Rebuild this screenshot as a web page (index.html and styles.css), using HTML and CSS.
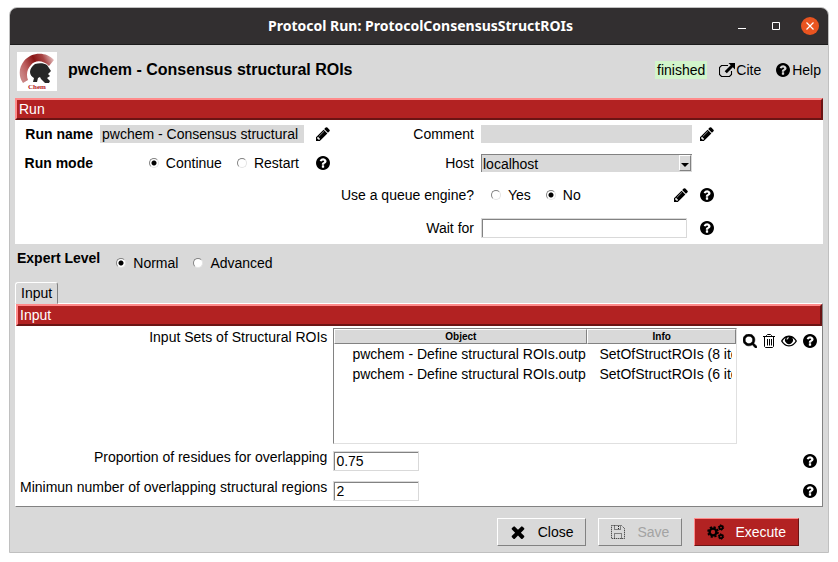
FILE: index.html
```html
<!DOCTYPE html>
<html lang="en">
<head>
<meta charset="utf-8">
<meta name="viewport" content="width=device-width, initial-scale=1">
<title>Protocol Run: ProtocolConsensusStructROIs</title>
<link rel="stylesheet" href="styles.css">
</head>
<body>
<svg class="sprite" aria-hidden="true">
  <symbol id="i-pencil" viewBox="128 128 1536 1536"><path d="M491 1536l91-91-235-235-91 91v107h128v128h107zm523-928q0-22-22-22-10 0-17 7l-542 542q-7 7-7 17 0 22 22 22 10 0 17-7l542-542q7-7 7-17zm-54-192l416 416-832 832h-416v-416zm683 96q0 53-37 90l-166 166-416-416 166-165q36-38 90-38 53 0 91 38l235 234q37 39 37 91z"/></symbol>
  <symbol id="i-help" viewBox="128 128 1536 1536"><path d="M1024 1376v-192q0-14-9-23t-23-9h-192q-14 0-23 9t-9 23v192q0 14 9 23t23 9h192q14 0 23-9t9-23zm256-672q0-88-55.5-163t-138.5-116-170-41q-243 0-371 213-15 24 8 42l132 100q7 6 19 6 16 0 25-12 53-68 86-92 34-24 86-24 48 0 85.5 26t37.5 59q0 38-20 61t-68 45q-63 28-115.5 86.5t-52.5 125.5v36q0 14 9 23t23 9h192q14 0 23-9t9-23q0-19 21.5-49.5t54.5-49.5q32-18 49-28.5t46-35 44.5-48 28-60.5 12.5-81zm384 192q0 209-103 385.5t-279.5 279.5-385.5 103-385.5-103-279.5-279.5-103-385.5 103-385.5 279.5-279.5 385.5-103 385.5 103 279.5 279.5 103 385.5z"/></symbol>
  <symbol id="i-search" viewBox="64 128 1664 1664"><path stroke="currentColor" stroke-width="70" d="M1216 832q0-185-131.5-316.5t-316.5-131.5-316.5 131.5-131.5 316.5 131.5 316.5 316.5 131.5 316.5-131.5 131.5-316.5zm512 832q0 52-38 90t-90 38q-54 0-90-38l-343-342q-179 124-399 124-143 0-273.5-55.5t-225-150-150-225-55.5-273.5 55.5-273.5 150-225 225-150 273.5-55.5 273.5 55.5 225 150 150 225 55.5 273.5q0 220-124 399l343 343q37 37 37 90z"/></symbol>
  <symbol id="i-times" viewBox="302 238 1188 1316"><path d="M1490 1322q0 40-28 68l-136 136q-28 28-68 28t-68-28l-294-294-294 294q-28 28-68 28t-68-28l-136-136q-28-28-28-68t28-68l294-294-294-294q-28-28-28-68t28-68l136-136q28-28 68-28t68 28l294 294 294-294q28-28 68-28t68 28l136 136q28 28 28 68t-28 68l-294 294 294 294q28 28 28 68z"/></symbol>
  <symbol id="i-trash" viewBox="0 0 12 14"><path fill="none" stroke="currentColor" d="M0 2.5h12M3.500 2.500V1.500L4.500 .5h3l1 1v1M1.500 3v9.500l1 1h7l1-1V3M4.500 5v6.500M6.500 5v6.500M8.500 5v6.500"/></symbol>
  <symbol id="i-eye" viewBox="0 0 16 12"><path fill-rule="evenodd" d="M8 .5C12 .5 14.500 3.500 16 6c-1.500 2.500-4 5.500-8 5.500S1.500 8.500 0 6C1.500 3.500 4 .5 8 .5zM1.500 6C3 8.500 5 10.300 8 10.300S13 8.500 14.500 6C13.700 4.600 12.700 3.500 11.300 2.700A4 4 0 1 1 4.700 2.700C3.300 3.500 2.300 4.600 1.500 6zM7.800 2.200A2.300 2.300 0 0 0 5.500 4.500h1A1.400 1.400 0 0 1 7.800 3.200z"/></symbol>
  <symbol id="i-external" viewBox="0 0 16 14"><path fill="none" stroke="currentColor" stroke-width="1.100" d="M9 2.500H2.500l-2 2v7l2 2h8l2-2V8"/><path d="M9.500 0H16v6.500l-2.200-2.200-6 6L5.700 8.200l6-6z"/></symbol>
  <symbol id="i-save" viewBox="0 0 14 14"><path fill="none" stroke="currentColor" stroke-dasharray="1 1" d="M.5 .5h10l3 3v10H.5zM3.500 .5v4h6v-4M3.500 13.500v-5h7v5M7.500 1v3"/></symbol>
  <symbol id="i-cogs" viewBox="0 0 18 16"><g fill="none" stroke="currentColor"><circle cx="6" cy="8" r="3.400" stroke-width="2.400"/><circle cx="6" cy="8" r="5" stroke-width="1.600" stroke-dasharray="2.200 1.727"/><circle cx="14" cy="3.500" r="1.700" stroke-width="1.700"/><circle cx="14" cy="3.500" r="2.700" stroke-width="1" stroke-dasharray="1.400 1.427"/><circle cx="14" cy="12.500" r="1.700" stroke-width="1.700"/><circle cx="14" cy="12.500" r="2.700" stroke-width="1" stroke-dasharray="1.400 1.427"/></g></symbol>
</svg>

<main class="window">
  <header class="titlebar">
    <h1 class="titlebar-text">Protocol Run: ProtocolConsensusStructROIs</h1>
    <div class="window-controls">
      <button class="win-btn" type="button" aria-label="Minimize"><svg width="8" height="8"><path d="M0 6.500h8" stroke="#fff"/></svg></button>
      <button class="win-btn" type="button" aria-label="Maximize"><svg width="8" height="8"><path d="M.5 .5h7v7h-7z" fill="none" stroke="#fff"/></svg></button>
      <button class="win-btn win-close" type="button" aria-label="Close window"><svg width="8" height="8"><path d="M.5 .5l7 7M7.500 .5l-7 7" stroke="#fff" stroke-width="1.200"/></svg></button>
    </div>
  </header>

  <div class="protocol-head">
    <svg class="logo" viewBox="0 0 40 39" role="img" aria-label="pwchem logo">
      <defs><linearGradient id="crest" x1="0" y1=".6" x2="1" y2=".2"><stop offset="0" stop-color="#c98484"/><stop offset=".2" stop-color="#bd5f5f"/><stop offset=".5" stop-color="#8a1616"/><stop offset=".75" stop-color="#a84545"/><stop offset="1" stop-color="#e6c2c2"/></linearGradient></defs>
      <path fill="#fff" d="M0 0h40v39H0z"/>
      <path fill="url(#crest)" d="M6 31C1 24 2 15 7 9 14 0 29-1 37 8l-5 6C26 8 18 8 14 13c-4 4-5 10-3 15z"/>
      <path fill="#262626" d="M16 30l1-4c-2-1-4-3-4-6 0-3 2-6 5-8 4-1 9-1 12 1l4 6-3 3 2 2-3 2 3 3-1 2h-4l-4-4-1-2-2 1-1 4z"/>
      <text class="logo-text" x="20" y="37" text-anchor="middle">Chem</text>
    </svg>
    <h2 class="protocol-name">pwchem - Consensus structural ROIs</h2>
    <span class="status">finished</span>
    <a class="head-link cite" href="#cite"><svg class="icon-wide"><use href="#i-external"/></svg>Cite</a>
    <a class="head-link" href="#help"><svg class="icon"><use href="#i-help"/></svg>Help</a>
  </div>

  <section class="run">
    <h3 class="bar">Run</h3>
    <div class="run-grid">
      <label class="lab strong" for="run-name">Run name</label>
      <input class="flat" id="run-name" type="text" value="pwchem - Consensus structural ROIs" readonly>
      <div class="tools"><button class="tool" type="button" aria-label="Edit run name"><svg class="icon"><use href="#i-pencil"/></svg></button></div>
      <label class="lab" for="comment">Comment</label>
      <input class="flat" id="comment" type="text" readonly>
      <div class="tools near"><button class="tool" type="button" aria-label="Edit comment"><svg class="icon"><use href="#i-pencil"/></svg></button></div>

      <span class="lab strong" id="mode-label">Run mode</span>
      <div class="radios mode" role="radiogroup" aria-labelledby="mode-label">
        <label class="radio"><input type="radio" name="mode" checked>Continue</label>
        <label class="radio"><input type="radio" name="mode">Restart</label>
      </div>
      <div class="tools"><button class="tool" type="button" aria-label="Run mode help"><svg class="icon"><use href="#i-help"/></svg></button></div>
      <label class="lab" for="host">Host</label>
      <div class="combo"><select id="host"><option>localhost</option></select><span class="combo-arrow"></span></div>
      <div></div>

      <span class="lab queue-lab" id="queue-label">Use a queue engine?</span>
      <div class="queue">
        <div class="radios" role="radiogroup" aria-labelledby="queue-label">
          <label class="radio"><input type="radio" name="queue">Yes</label>
          <label class="radio"><input type="radio" name="queue" checked>No</label>
        </div>
        <button class="tool" type="button" aria-label="Edit queue parameters"><svg class="icon"><use href="#i-pencil"/></svg></button>
      </div>
      <div class="tools near"><button class="tool" type="button" aria-label="Queue help"><svg class="icon"><use href="#i-help"/></svg></button></div>

      <label class="lab queue-lab" for="wait">Wait for</label>
      <div class="wait"><input class="sunken" id="wait" type="text"></div>
      <div class="tools near"><button class="tool" type="button" aria-label="Wait for help"><svg class="icon"><use href="#i-help"/></svg></button></div>
    </div>
  </section>

  <div class="expert" role="radiogroup" aria-labelledby="expert-label">
    <span class="strong" id="expert-label">Expert Level</span>
    <div class="radios expert-options">
      <label class="radio"><input type="radio" name="level" checked>Normal</label>
      <label class="radio"><input type="radio" name="level">Advanced</label>
    </div>
  </div>

  <div class="tabs" role="tablist"><button class="tab" type="button" role="tab" aria-selected="true">Input</button></div>
  <section class="panel" role="tabpanel">
    <h3 class="bar">Input</h3>
    <div class="form">
      <span class="lab" id="sets-label">Input Sets of Structural ROIs</span>
      <div class="table-box">
        <table aria-labelledby="sets-label">
          <colgroup><col class="col-object"><col></colgroup>
          <thead><tr><th>Object</th><th>Info</th></tr></thead>
          <tbody>
            <tr><td><div class="clip">pwchem - Define structural ROIs.outp</div></td><td><div class="clip">SetOfStructROIs (8 items)</div></td></tr>
            <tr><td><div class="clip">pwchem - Define structural ROIs.outp</div></td><td><div class="clip">SetOfStructROIs (6 items)</div></td></tr>
          </tbody>
        </table>
      </div>
      <div class="row-tools">
        <button class="tool" type="button" aria-label="Select"><svg class="icon"><use href="#i-search"/></svg></button>
        <button class="tool" type="button" aria-label="Remove"><svg class="icon-thin"><use href="#i-trash"/></svg></button>
        <button class="tool" type="button" aria-label="Visualize"><svg class="icon-wide"><use href="#i-eye"/></svg></button>
        <button class="tool" type="button" aria-label="Input sets help"><svg class="icon"><use href="#i-help"/></svg></button>
      </div>

      <label class="lab" for="overlap">Proportion of residues for overlapping</label>
      <input class="sunken short" id="overlap" type="text" value="0.75">
      <div class="row-tools"><button class="tool" type="button" aria-label="Proportion help"><svg class="icon"><use href="#i-help"/></svg></button></div>

      <label class="lab" for="minimum">Minimun number of overlapping structural regions</label>
      <input class="sunken short" id="minimum" type="text" value="2">
      <div class="row-tools"><button class="tool" type="button" aria-label="Minimum number help"><svg class="icon"><use href="#i-help"/></svg></button></div>
    </div>
  </section>

  <footer class="actions">
    <button class="btn" type="button"><svg class="icon-wide"><use href="#i-times"/></svg>Close</button>
    <button class="btn" type="button" disabled><svg class="icon"><use href="#i-save"/></svg>Save</button>
    <button class="btn primary" type="button"><svg class="icon-cogs"><use href="#i-cogs"/></svg>Execute</button>
  </footer>
</main>
</body>
</html>
```
FILE: styles.css
```css
* { box-sizing: border-box; }
body {
  margin: 0;
  padding: 7px 9px 9px;
  background: #fff;
  color: #000;
  font: 14px/18px "Liberation Sans", Arial, sans-serif;
}
h1, h2, h3 { margin: 0; font-size: 14px; font-weight: 400; }
button, input, select { font: inherit; color: inherit; margin: 0; border-radius: 0; }
button { padding: 0; border: 0; background: none; }
svg { display: block; flex: none; fill: currentColor; }
.sprite { position: absolute; width: 0; height: 0; }
.strong { font-weight: 700; }
.icon { width: 14px; height: 14px; }
.icon-thin { width: 12px; height: 14px; }
.icon-wide { width: 16px; height: 14px; }
.icon-cogs { width: 18px; height: 16px; color: #000; }

.window {
  border: 1px solid #c0c0c0;
  border-radius: 8px 8px 0 0;
  background: #d9d9d9;
  overflow: hidden;
}
.titlebar {
  display: grid;
  grid-template-columns: 1fr auto 1fr;
  align-items: center;
  height: 37px;
  padding-right: 9px;
  background: #322f30;
  border-bottom: 1px solid #1c1c1c;
  color: #fff;
}
.titlebar-text { grid-column: 2; padding-left: 12px; font: 700 14px/18px "Noto Sans", sans-serif; }
.window-controls { display: flex; justify-content: flex-end; align-items: center; gap: 16px; }
.win-btn { display: grid; place-items: center; width: 18px; height: 18px; }
.win-close { border-radius: 50%; background: #e95420; }

.protocol-head { display: flex; align-items: center; height: 53px; padding: 0 7px 4px; }
.logo { width: 40px; height: 39px; margin-top: 4px; }
.logo-text { font: 700 7px "Liberation Serif", serif; fill: #b22222; }
.protocol-name { flex: 1; padding-left: 11px; font-size: 16px; font-weight: 700; }
.status { padding: 0 2px; background: #d2f5cb; }
.head-link { display: flex; align-items: center; gap: 2px; margin-left: 15px; color: inherit; text-decoration: none; }
.head-link.cite { gap: 1px; margin-left: 12px; }

.run { margin: 0 5px; background: #fff; }
.bar {
  height: 22px;
  padding-left: 2px;
  border: 2px solid;
  border-color: #ff8b8b #6b1414 #6b1414 #ff8b8b;
  background: #b22222;
  color: #fff;
}
.run-grid {
  display: grid;
  grid-template-columns: 78px minmax(0, 204fr) 34px 122px minmax(0, 211fr) minmax(20px, 124fr);
  grid-template-rows: 28px 30px 34px 32px;
  column-gap: 7px;
  align-items: center;
}
.lab { text-align: right; white-space: nowrap; }
.queue-lab { grid-column: 3 / 5; }
.tools { display: flex; padding-left: 5px; }
.tools.near { padding-left: 1px; }
.tool { display: flex; }
.flat { width: 100%; height: 18px; padding: 0 2px; border: 0; background: #d9d9d9; }
.sunken {
  display: block;
  width: 100%;
  height: 20px;
  padding: 0 2px;
  border: 1px solid #d9d9d9;
  background: #fff;
  box-shadow: inset 1px 1px #828282;
}
.combo { position: relative; }
.combo select {
  display: block;
  appearance: none;
  width: 100%;
  height: 18px;
  padding: 0 16px 0 1px;
  border: 0 solid #828282;
  border-width: 1px 0 0 1px;
  background: #d9d9d9;
}
.combo-arrow {
  position: absolute;
  top: 1px;
  right: 1px;
  display: grid;
  place-items: center;
  width: 12px;
  height: 16px;
  border: 1px solid;
  border-color: #fff #828282 #828282 #fff;
  background: #d9d9d9;
  pointer-events: none;
}
.combo-arrow::after { content: ""; margin-top: 4px; border: 4px solid transparent; border-top-color: #000; border-bottom: 0; }
.radios { display: flex; gap: 15px; }
.mode { justify-content: flex-end; padding-right: 5px; }
.radio { display: flex; align-items: center; gap: 7px; }
.radio input {
  appearance: none;
  width: 10px;
  height: 10px;
  border: 1px solid;
  border-color: #828282 #e4e4e4 #e4e4e4 #828282;
  border-radius: 50%;
  background: #fff;
}
.radio input:checked { background: radial-gradient(circle, #000 2px, #fff 3px); }
.queue { display: flex; align-items: center; justify-content: space-between; padding: 0 4px 0 10px; }
.wait { padding-right: 5px; }

.expert { display: flex; align-items: center; height: 38px; padding: 0 7px; }
.expert .strong { padding-bottom: 10px; }
.expert-options { padding-left: 16px; }
.tabs { display: flex; padding: 0 5px; }
.tab {
  height: 22px;
  margin-bottom: -1px;
  padding: 0 5px;
  border: 1px solid;
  border-color: #fff #828282 #d9d9d9 #fff;
  border-radius: 3px 3px 0 0;
  background: #d9d9d9;
}
.panel {
  margin: 0 5px;
  border: 1px solid;
  border-color: #fff #828282 #828282 #fff;
  background: #fff;
}
.form {
  display: grid;
  grid-template-columns: max-content minmax(0, 1fr) auto;
  grid-template-rows: auto 30px 30px;
  column-gap: 6px;
  padding: 0 5px 0 4px;
}
.form .lab { padding-top: 2px; }
.short { width: 86px; margin-top: 5px; }
.table-box {
  height: 116px;
  margin: 2px 0;
  border: 1px solid;
  border-color: #828282 #e0e0e0 #e0e0e0 #828282;
}
table { width: 100%; table-layout: fixed; border-collapse: separate; border-spacing: 0; }
.col-object { width: 63%; }
th {
  height: 15px;
  padding: 0;
  border: 1px solid;
  border-color: #fff #828282 #828282 #fff;
  background: #d9d9d9;
  font-size: 10px;
  line-height: 12px;
}
td { height: 20px; padding: 0 0 1px 18px; white-space: nowrap; }
td + td { padding: 0 4px 1px 12px; }
.clip { overflow: hidden; }
.row-tools { display: flex; justify-content: flex-end; align-items: flex-start; gap: 6px; padding-top: 8px; }

.actions { display: flex; justify-content: flex-end; gap: 12px; padding: 11px 29px 6px; }
.btn {
  display: flex;
  align-items: center;
  gap: 12px;
  height: 28px;
  padding: 0 12px;
  border: 1px solid;
  border-color: #fff #828282 #828282 #fff;
}
.btn:disabled { color: #a3a3a3; }
.btn:disabled svg { color: #222; }
.btn.primary { gap: 10px; border-color: #ff8b8b #6b1414 #6b1414 #ff8b8b; background: #b22222; color: #fff; }
```
